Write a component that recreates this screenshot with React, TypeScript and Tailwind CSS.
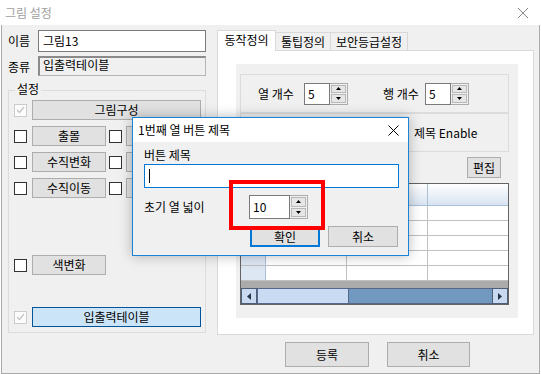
import React from "react";

function Check({ disabled }: { disabled?: boolean }) {
  if (disabled) {
    return (
      <div className="w-[13px] h-[13px] shrink-0 border border-[#cccccc] bg-[#fcfcfc] flex items-center justify-center">
        <svg width="9" height="8" viewBox="0 0 9 8">
          <path d="M1 4 L3.5 6.5 L8 1" fill="none" stroke="#c4c4c4" strokeWidth="1.2" />
        </svg>
      </div>
    );
  }
  return <div className="w-[13px] h-[13px] shrink-0 border border-[#333333] bg-white" />;
}

function Btn({ children, className }: { children?: React.ReactNode; className: string }) {
  return (
    <div className={"flex items-center justify-center bg-[#e1e1e1] border border-[#adadad] shrink-0 " + className}>
      {children}
    </div>
  );
}

function Arrow({ down }: { down?: boolean }) {
  return (
    <svg width="5" height="3" viewBox="0 0 5 3">
      {down ? <path d="M0 0 L5 0 L2.5 3Z" fill="#000" /> : <path d="M0 3 L2.5 0 L5 3Z" fill="#000" />}
    </svg>
  );
}

function Spin({ value, inputCls, heightCls }: { value: string; inputCls: string; heightCls: string }) {
  return (
    <div className={"flex shrink-0 " + heightCls}>
      <div className={"bg-white border border-[#7a7a7a] flex items-center pl-[3px] " + inputCls}>{value}</div>
      <div className="w-[18px] flex flex-col border border-l-0 border-[#acacac] bg-[#f0f0f0] p-[1px] gap-[1px]">
        <div className="flex-1 bg-[#e6e6e6] border border-[#b9b9b9] flex items-center justify-center">
          <Arrow />
        </div>
        <div className="flex-1 bg-[#e6e6e6] border border-[#b9b9b9] flex items-center justify-center">
          <Arrow down />
        </div>
      </div>
    </div>
  );
}

function GridRow() {
  return (
    <div className="h-[15px] flex border-b border-[#c0c0c0]">
      <div className="w-[25px] bg-[#dde7f4] border-r border-[#a9bfd6]" />
      <div className="w-[81px] border-r border-[#c0c0c0]" />
      <div className="w-[81px] border-r border-[#c0c0c0]" />
      <div className="flex-1" />
    </div>
  );
}

export default function App() {
  return (
    <div className="w-[541px] h-[374px] bg-white relative overflow-hidden [font-family:'Noto_Sans_CJK_KR','Noto_Sans',sans-serif] text-[12px] text-black leading-none">
      {/* title bar */}
      <div className="h-[25px] flex items-center justify-between pl-[5px] pr-[11px]">
        <span className="text-[#a0a0a0]">그림 설정</span>
        <svg width="14" height="14" viewBox="0 0 14 14">
          <path d="M2 2 L12 12 M12 2 L2 12" stroke="#8a8a8a" strokeWidth="1" />
        </svg>
      </div>

      {/* body */}
      <div className="ml-[1px] w-[539px] h-[349px] border-x border-b border-[#aaaaaa] bg-[#f0f0f0] flex pl-[6px] pt-[5px]">
        {/* left column */}
        <div className="w-[198px] flex flex-col shrink-0">
          <div className="flex h-[22px] items-center">
            <span className="w-[30px]">이름</span>
            <div className="w-[168px] h-full bg-white border border-[#7a7a7a] flex items-center pl-[4px]">그림13</div>
          </div>
          <div className="flex h-[20px] mt-[4px] items-center">
            <span className="w-[30px] pt-[2px]">종류</span>
            <div className="w-[168px] h-full bg-[#f0f0f0] border border-[#b5b5b5] border-t-2 border-l-2 border-t-[#8a8a8a] border-l-[#8a8a8a] flex items-start pl-[3px] pt-[1px]">
              입출력테이블
            </div>
          </div>

          {/* group box */}
          <div className="relative mt-[14px] h-[243px] border border-[#dcdcdc] pl-[5px] pt-[9px] flex flex-col">
            <span className="absolute left-[6px] -top-[9px] px-[2px] bg-[#f0f0f0] leading-[14px]">설정</span>
            <div className="flex items-center h-[20px]">
              <Check disabled />
              <Btn className="ml-[5px] w-[169px] h-full">그림구성</Btn>
            </div>
            <div className="flex items-center h-[20px] mt-[6px]">
              <Check />
              <Btn className="ml-[5px] w-[74px] h-full">출몰</Btn>
              <div className="ml-[3px]"><Check /></div>
              <Btn className="ml-[4px] w-[74px] h-full" />
            </div>
            <div className="flex items-center h-[20px] mt-[6px]">
              <Check />
              <Btn className="ml-[5px] w-[74px] h-full">수직변화</Btn>
              <div className="ml-[3px]"><Check /></div>
              <Btn className="ml-[4px] w-[74px] h-full" />
            </div>
            <div className="flex items-center h-[20px] mt-[6px]">
              <Check />
              <Btn className="ml-[5px] w-[74px] h-full">수직이동</Btn>
              <div className="ml-[3px]"><Check /></div>
              <Btn className="ml-[4px] w-[74px] h-full" />
            </div>
            <div className="flex items-center h-[20px] mt-[57px]">
              <Check />
              <Btn className="ml-[5px] w-[74px] h-full">색변화</Btn>
            </div>
            <div className="flex items-center h-[20px] mt-[32px]">
              <Check disabled />
              <div className="ml-[5px] w-[169px] h-full flex items-center justify-center bg-[#cce4f7] border border-[#005499]">
                입출력테이블
              </div>
            </div>
          </div>
        </div>

        {/* right column */}
        <div className="ml-[11px] w-[317px] flex flex-col shrink-0">
          <div className="h-[20px] flex items-start">
            <div className="relative z-10 w-[59px] h-[21px] bg-white border border-b-0 border-[#d9d9d9] flex items-center justify-center pb-[3px]">
              동작정의
            </div>
            <div className="self-end w-[55px] h-[18px] bg-[#f0f0f0] border border-b-0 border-l-0 border-[#d9d9d9] flex items-center justify-center">
              툴팁정의
            </div>
            <div className="self-end w-[77px] h-[18px] bg-[#f0f0f0] border border-b-0 border-l-0 border-[#d9d9d9] flex items-center justify-center">
              보안등급설정
            </div>
          </div>
          <div className="h-[285px] bg-white border border-[#d9d9d9] pl-[18px] pt-[13px]">
            <div className="w-[282px] h-[254px] bg-[#f0f0f0] pl-[4px] pt-[10px] flex flex-col">
              <div className="w-[269px] h-[39px] border border-[#dcdcdc] flex items-center pl-[17px]">
                <span className="w-[46px]">열 개수</span>
                <Spin value="5" inputCls="w-[26px]" heightCls="h-[22px]" />
                <span className="ml-[35px] w-[42px]">행 개수</span>
                <Spin value="5" inputCls="w-[26px]" heightCls="h-[22px]" />
              </div>
              <div className="w-[269px] h-[39px] border border-[#dcdcdc] flex items-center pl-[149px]">
                <Check />
                <span className="ml-[11px]">제목 Enable</span>
              </div>
              <div className="w-[269px] mt-[5px] flex justify-end pr-[8px]">
                <Btn className="w-[34px] h-[21px]">편집</Btn>
              </div>
              <div className="w-[269px] h-[122px] mt-[5px] border border-[#646464] bg-white flex flex-col">
                <div className="h-[22px] flex border-b border-[#a9bfd6] bg-gradient-to-b from-white to-[#d8e3f1]">
                  <div className="w-[25px] border-r border-[#a9bfd6]" />
                  <div className="w-[81px] border-r border-[#a9bfd6]" />
                  <div className="w-[81px] border-r border-[#a9bfd6]" />
                  <div className="flex-1" />
                </div>
                <GridRow />
                <GridRow />
                <GridRow />
                <GridRow />
                <GridRow />
                <div className="h-[7px] bg-[#ababab]" />
                <div className="h-[16px] flex">
                  <div className="w-[16px] bg-[#c9d9ef] border border-[#4d5f78] flex items-center justify-center">
                    <svg width="4" height="7" viewBox="0 0 4 7"><path d="M4 0 L0 3.5 L4 7Z" fill="#263447" /></svg>
                  </div>
                  <div className="w-[92px] bg-[#c9dbf2] border border-[#55688a]" />
                  <div className="w-[143px] bg-[#7398c0] border-y border-[#55688a]" />
                  <div className="w-[16px] bg-[#c9d9ef] border border-[#4d5f78] flex items-center justify-center">
                    <svg width="4" height="7" viewBox="0 0 4 7"><path d="M0 0 L4 3.5 L0 7Z" fill="#263447" /></svg>
                  </div>
                </div>
              </div>
            </div>
          </div>
          <div className="mt-[7px] pl-[68px] flex gap-[18px]">
            <Btn className="w-[84px] h-[25px]">등록</Btn>
            <Btn className="w-[83px] h-[25px]">취소</Btn>
          </div>
        </div>
      </div>

      {/* dialog */}
      <div className="absolute left-[132px] top-[117px] w-[277px] h-[139px] border border-[#1883d7] bg-[#f0f0f0] shadow-[0_0_12px_rgba(0,0,0,0.28)] flex flex-col">
        <div className="h-[24px] bg-white flex items-center justify-between pl-[5px] pr-[9px] shrink-0">
          <span>1번째 열 버튼 제목</span>
          <svg width="11" height="11" viewBox="0 0 11 11">
            <path d="M0.5 0.5 L10.5 10.5 M10.5 0.5 L0.5 10.5" stroke="#000" strokeWidth="1" />
          </svg>
        </div>
        <div className="pl-[11px] pt-[6px] flex flex-col">
          <span className="h-[14px] flex items-center">버튼 제목</span>
          <div className="mt-[2px] w-[255px] h-[24px] bg-white border border-[#0078d7] flex items-center pl-[4px]">
            <div className="w-px h-[14px] bg-black" />
          </div>
          <div className="mt-[7px] h-[24px] flex items-center">
            <span className="w-[105px]">초기 열 넓이</span>
            <Spin value="10" inputCls="w-[41px]" heightCls="h-[24px]" />
          </div>
          <div className="mt-[7px] flex">
            <div className="ml-[106px] w-[70px] h-[21px] flex items-center justify-center bg-[#e1e1e1] border-2 border-[#0078d7]">확인</div>
            <Btn className="ml-[8px] w-[70px] h-[21px]">취소</Btn>
          </div>
        </div>
      </div>

      {/* red highlight */}
      <div className="absolute left-[229px] top-[180px] w-[96px] h-[50px] border-4 border-[#ff0000]" />
    </div>
  );
}
